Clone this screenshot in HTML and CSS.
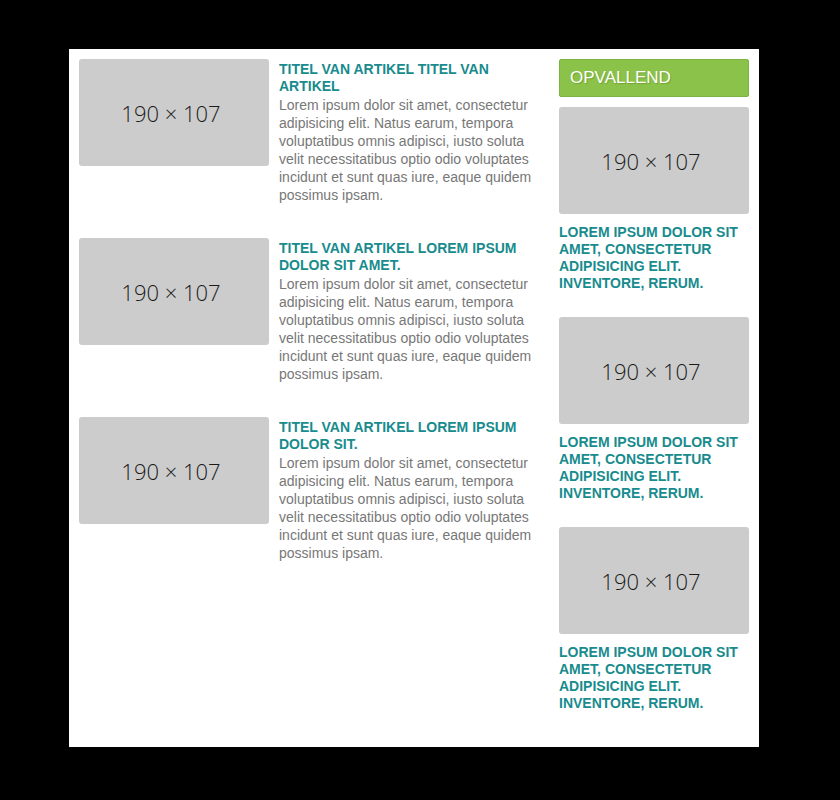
FILE: index.html
```html
<!DOCTYPE html>
<html>
<head>
<meta charset="utf-8">
<link rel="stylesheet" href="styles.css">
</head>
<body>
<div class="page">
  <div class="main">
    <div class="article">
      <div class="ph"><span>190 × 107</span></div>
      <div class="text">
        <h3 class="title">Titel van artikel titel van artikel</h3>
        <p class="body">Lorem ipsum dolor sit amet, consectetur adipisicing elit. Natus earum, tempora voluptatibus omnis adipisci, iusto soluta velit necessitatibus optio odio voluptates incidunt et sunt quas iure, eaque quidem possimus ipsam.</p>
      </div>
    </div>
    <div class="article">
      <div class="ph"><span>190 × 107</span></div>
      <div class="text">
        <h3 class="title">Titel van artikel Lorem ipsum dolor sit amet.</h3>
        <p class="body">Lorem ipsum dolor sit amet, consectetur adipisicing elit. Natus earum, tempora voluptatibus omnis adipisci, iusto soluta velit necessitatibus optio odio voluptates incidunt et sunt quas iure, eaque quidem possimus ipsam.</p>
      </div>
    </div>
    <div class="article">
      <div class="ph"><span>190 × 107</span></div>
      <div class="text">
        <h3 class="title">Titel van artikel Lorem ipsum dolor sit.</h3>
        <p class="body">Lorem ipsum dolor sit amet, consectetur adipisicing elit. Natus earum, tempora voluptatibus omnis adipisci, iusto soluta velit necessitatibus optio odio voluptates incidunt et sunt quas iure, eaque quidem possimus ipsam.</p>
      </div>
    </div>
  </div>
  <div class="side">
    <div class="side-head">OPVALLEND</div>
    <div class="feature">
      <div class="ph"><span>190 × 107</span></div>
      <h4 class="ftitle">Lorem ipsum dolor sit amet, consectetur adipisicing elit. Inventore, rerum.</h4>
    </div>
    <div class="feature">
      <div class="ph"><span>190 × 107</span></div>
      <h4 class="ftitle">Lorem ipsum dolor sit amet, consectetur adipisicing elit. Inventore, rerum.</h4>
    </div>
    <div class="feature">
      <div class="ph"><span>190 × 107</span></div>
      <h4 class="ftitle">Lorem ipsum dolor sit amet, consectetur adipisicing elit. Inventore, rerum.</h4>
    </div>
  </div>
</div>
</body>
</html>
```
FILE: styles.css
```css
html, body {
  margin: 0;
  padding: 0;
  background: #000;
}
body {
  padding: 49px 0 0 69px;
  font-family: "Liberation Sans", Arial, sans-serif;
}
.page {
  width: 670px;
  padding: 10px;
  background: #fff;
  display: flex;
  gap: 10px;
  align-items: flex-start;
}
.main {
  width: 470px;
  display: flex;
  flex-direction: column;
  gap: 34px;
}
.article {
  display: flex;
  gap: 10px;
  align-items: flex-start;
}
.ph {
  width: 190px;
  height: 107px;
  flex: none;
  background: #cccccc;
  border-radius: 3px;
  display: flex;
  align-items: center;
  justify-content: center;
}
.ph span {
  font-family: "Open Sans", sans-serif;
  font-weight: 300;
  font-size: 22px;
  color: #1a1a1a;
  padding-right: 6px;
}
.text {
  width: 260px;
  padding-top: 2px;
}
.title {
  margin: 0 0 1px 0;
  font-size: 14px;
  line-height: 17px;
  font-weight: bold;
  text-transform: uppercase;
  color: #178b8d;
}
.body {
  margin: 0;
  font-size: 14px;
  line-height: 18px;
  color: #777;
}
.side {
  width: 190px;
  display: flex;
  flex-direction: column;
}
.side-head {
  box-sizing: border-box;
  height: 38px;
  background: #8bc34a;
  border: 1px solid #7cb342;
  border-radius: 2px;
  color: #fff;
  font-size: 17px;
  line-height: 35px;
  padding-left: 10px;
  text-shadow: 1px 1px 1px rgba(90, 120, 30, 0.45);
  margin-bottom: 10px;
}
.feature {
  margin-bottom: 25px;
}
.ftitle {
  margin: 10px 0 0 0;
  font-size: 14px;
  line-height: 17px;
  font-weight: bold;
  text-transform: uppercase;
  color: #178b8d;
}
```
